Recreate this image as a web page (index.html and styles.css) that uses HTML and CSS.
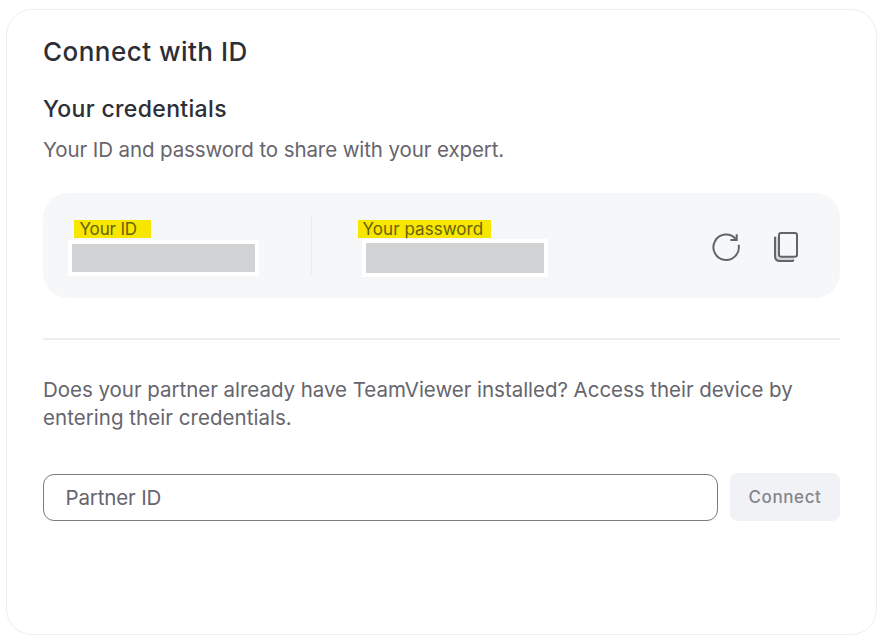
FILE: index.html
```html
<!DOCTYPE html>
<html lang="en">
<head>
<meta charset="utf-8">
<title>Connect with ID</title>
<link rel="stylesheet" href="styles.css">
</head>
<body>
<main class="card">
  <h1 class="title"><span>Connect with ID</span></h1>
  <h2 class="subtitle"><span>Your credentials</span></h2>
  <p class="text intro"><span>Your ID and password to share with your expert.</span></p>
  <section class="credentials">
    <div class="field field-id">
      <span class="label label-id">Your ID</span>
      <div class="value value-id"></div>
    </div>
    <div class="field field-password">
      <span class="label label-password">Your password</span>
      <div class="value value-password"></div>
    </div>
    <div class="actions">
      <svg class="icon" viewBox="0 0 32 32" aria-label="Refresh">
        <path d="M28.6 14.8A12.7 12.7 0 1 1 25.9 9.1" />
        <path d="M26.7 4.2V10H20.4" />
      </svg>
      <svg class="icon" viewBox="0 0 32 32" aria-label="Copy">
        <path class="shade" d="M8 6.7H5V26Q5 31 10 31H24V27.5H8Z" />
        <path d="M5 6.7V26Q5 31 10 31H22.5L24 30" />
        <rect class="sheet" x="9" y="3" width="18" height="23.8" rx="2" />
      </svg>
    </div>
  </section>
  <hr class="divider">
  <p class="text partner"><span class="line-one">Does your partner already have TeamViewer installed? Access their device by</span><br><span class="line-two">entering their credentials.</span></p>
  <form class="connect">
    <div class="input"><span>Partner ID</span></div>
    <button class="button" type="button" disabled><span>Connect</span></button>
  </form>
</main>
</body>
</html>
```
FILE: styles.css
```css
* { box-sizing: border-box; }
body {
  margin: 0;
  background: #fff;
  font-family: Inter, "Liberation Sans", sans-serif;
}
.card {
  width: 871px;
  height: 626px;
  margin: 9px 6px 0;
  padding: 24px 36px 0;
  border: 1px solid #ededf4;
  border-radius: 26px;
}
.title, .subtitle, .text { margin: 0; white-space: nowrap; }
.title {
  font-size: 26px;
  line-height: 36px;
  font-weight: 500;
  letter-spacing: 0.48px;
  color: #2d2e35;
}
.subtitle {
  margin-top: 23px;
  font-size: 23px;
  line-height: 32px;
  font-weight: 500;
  letter-spacing: 0.34px;
  color: #2d2e35;
}
.text {
  font-size: 20.5px;
  line-height: 28px;
  color: #66656d;
}
.intro { margin-top: 11px; letter-spacing: -0.1px; }
.credentials {
  display: flex;
  height: 105px;
  margin-top: 29px;
  border-radius: 25px;
  background: #f6f7f9;
}
.field { padding-top: 27px; }
.field-id {
  width: 269px;
  padding-left: 25px;
  background: linear-gradient(#e9eaed, #e9eaed) no-repeat 268px 24px / 1px 57px;
}
.field-password { width: 398px; padding-left: 46px; }
.label {
  display: block;
  height: 18px;
  font-size: 17px;
  line-height: 19px;
  white-space: nowrap;
  background: #f7e600;
  color: #69620c;
}
.label-id { width: 77px; margin-left: 6px; padding-left: 5.5px; letter-spacing: -0.15px; }
.label-password { width: 133px; padding-left: 4.5px; letter-spacing: 0.05px; }
.value { border: 4px solid #fff; background: #d1d2d3; }
.value-id { width: 191px; height: 36px; margin-top: 2px; }
.value-password { width: 186px; height: 38px; margin: 1px 0 0 4px; }
.actions {
  display: flex;
  gap: 28px;
  align-items: flex-start;
  padding-top: 37px;
}
.icon {
  width: 32px;
  height: 32px;
  fill: none;
  stroke: #62636b;
  stroke-width: 2;
}
.shade { fill: #d4d5da; stroke: none; }
.sheet { fill: #f6f7f9; }
.divider { height: 2px; margin: 40px 0 0; border: 0; background: #ededf0; }
.partner { margin-top: 36px; }
.line-one { letter-spacing: -0.035px; }
.line-two { letter-spacing: 0.04px; }
.connect { display: flex; align-items: center; gap: 12px; margin-top: 41px; }
.input {
  flex: 1;
  height: 47px;
  margin-top: 1px;
  padding-left: 21.5px;
  border: 1px solid #7c7b83;
  border-radius: 11px;
  font-size: 20.5px;
  line-height: 46px;
  letter-spacing: -0.15px;
  color: #66656d;
}
.button {
  width: 110px;
  height: 48px;
  padding: 0;
  border: 0;
  border-radius: 8px;
  background: #f1f2f6;
  font: 500 17px/48px Inter, sans-serif;
  letter-spacing: 0.6px;
  color: #84858a;
}
```
